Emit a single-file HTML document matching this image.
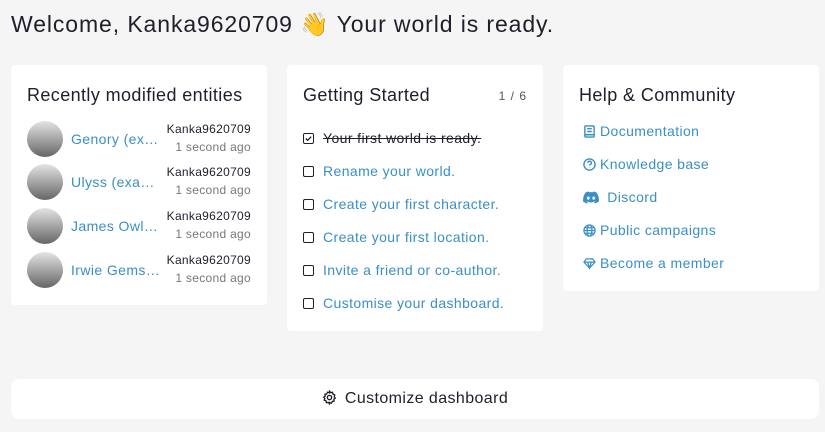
<!DOCTYPE html>
<html><head><style>
body{margin:0;width:825px;height:432px;background:#f5f5f5;font-family:"Liberation Sans",sans-serif;color:#1f1f2b;position:relative;overflow:hidden;letter-spacing:0.4px}
.t{position:absolute;left:11px;top:11px;font-size:23px;letter-spacing:0.9px}
.card{position:absolute;background:#fff;border-radius:4px}
.h{position:absolute;left:16px;top:20px;font-size:18px;letter-spacing:0.4px}
a{color:#3a8fc4;text-decoration:none}
.row{position:absolute;left:16px;width:224px;height:38px}
.av{position:absolute;left:0;top:0;width:36px;height:36px;border-radius:50%;background:linear-gradient(#e4e4e4,#666)}
.nm{position:absolute;left:44px;top:10px;font-size:14px;color:#3a8fc4}
.u{position:absolute;right:0;top:-1px;font-size:12px;text-align:right;line-height:18px;letter-spacing:0.3px}
.u span{color:#777}
.gi{position:absolute;left:16px;font-size:14px;color:#3a8fc4}
.cb{display:inline-block;width:9px;height:9px;border:1.5px solid #1f1f2b;border-radius:2px;margin-right:9px;vertical-align:-1px;position:relative}
.hl{position:absolute;left:20px;font-size:14px;color:#3a8fc4;display:flex;align-items:center;gap:4px}
.hl svg{width:13px;height:13px}
</style></head><body>
<div class="t">Welcome, Kanka9620709 👋 Your world is ready.</div>

<div class="card" style="left:11px;top:65px;width:256px;height:240px">
<div class="h">Recently modified entities</div>
<div class="row" style="top:56px"><div class="av"></div><div class="nm">Genory (ex…</div><div class="u">Kanka9620709<br><span>1 second ago</span></div></div>
<div class="row" style="top:99px"><div class="av"></div><div class="nm">Ulyss (exa…</div><div class="u">Kanka9620709<br><span>1 second ago</span></div></div>
<div class="row" style="top:143px"><div class="av"></div><div class="nm">James Owl…</div><div class="u">Kanka9620709<br><span>1 second ago</span></div></div>
<div class="row" style="top:187px"><div class="av"></div><div class="nm">Irwie Gems…</div><div class="u">Kanka9620709<br><span>1 second ago</span></div></div>
</div>

<div class="card" style="left:287px;top:65px;width:256px;height:266px">
<div class="h">Getting Started</div>
<div style="position:absolute;right:16px;top:24px;font-size:12px;color:#555;letter-spacing:1px">1 / 6</div>
<div class="gi" style="top:65px;color:#1f1f2b"><span class="cb"><svg viewBox="0 0 10 10" style="position:absolute;left:0;top:0;width:9px;height:9px" fill="none" stroke="#1f1f2b" stroke-width="1.4"><path d="M2 5l2 2 4-4"/></svg></span><s>Your first world is ready.</s></div>
<div class="gi" style="top:98px"><span class="cb"></span>Rename your world.</div>
<div class="gi" style="top:131px"><span class="cb"></span>Create your first character.</div>
<div class="gi" style="top:164px"><span class="cb"></span>Create your first location.</div>
<div class="gi" style="top:197px"><span class="cb"></span>Invite a friend or co-author.</div>
<div class="gi" style="top:230px"><span class="cb"></span>Customise your dashboard.</div>
</div>

<div class="card" style="left:563px;top:65px;width:256px;height:226px">
<div class="h">Help &amp; Community</div>
<div class="hl" style="top:58px"><svg viewBox="0 0 14 14" fill="none" stroke="#3a8fc4" stroke-width="1.5"><rect x="2" y="1" width="10" height="12" rx="1"/><path d="M4.5 4h5M4.5 7h5M2 10.5h10"/></svg>Documentation</div>
<div class="hl" style="top:91px"><svg viewBox="0 0 14 14" fill="none" stroke="#3a8fc4" stroke-width="1.5"><circle cx="7" cy="7" r="6"/><path d="M5.2 5.3a1.9 1.9 0 1 1 2.5 1.8c-.5.2-.7.6-.7 1.1M7 10v.3"/></svg>Knowledge base</div>
<div class="hl" style="top:124px"><svg viewBox="0 0 16 12" style="width:16px"><path fill="#3a8fc4" d="M13.5 1A13 13 0 0 0 10.3 0l-.4.8a12 12 0 0 0-3.8 0L5.7 0A13 13 0 0 0 2.5 1C.4 4-.1 7 .1 10a13 13 0 0 0 4 2l.8-1.3-1.3-.6.3-.2a9 9 0 0 0 8.2 0l.3.2-1.3.6.8 1.3a13 13 0 0 0 4-2c.3-3.4-.5-6.4-2.4-9zM5.3 8.2c-.8 0-1.4-.7-1.4-1.6S4.5 5 5.3 5s1.5.7 1.4 1.6c0 .9-.6 1.6-1.4 1.6zm5.4 0c-.8 0-1.4-.7-1.4-1.6S9.9 5 10.7 5s1.5.7 1.4 1.6c0 .9-.6 1.6-1.4 1.6z"/></svg>&nbsp;Discord</div>
<div class="hl" style="top:157px"><svg viewBox="0 0 14 14" fill="none" stroke="#3a8fc4" stroke-width="1.3"><circle cx="7" cy="7" r="6"/><ellipse cx="7" cy="7" rx="2.6" ry="6"/><path d="M1 7h12M2 4h10M2 10h10"/></svg>Public campaigns</div>
<div class="hl" style="top:190px"><svg viewBox="0 0 14 14" fill="none" stroke="#3a8fc4" stroke-width="1.3"><path d="M3.5 2h7l2.5 3.5L7 12 1 5.5zM1 5.5h12M5 5.5l2 6.5 2-6.5"/></svg>Become a member</div>
</div>

<div class="card" style="left:11px;top:379px;width:808px;height:40px;border-radius:8px">
<div style="position:absolute;left:0;right:0;top:11px;text-align:center;font-size:16px"><svg viewBox="0 0 16 16" width="15" height="15" style="vertical-align:-2px;margin-right:8px" fill="none" stroke="#1f1f2b" stroke-width="1.4"><circle cx="8" cy="8" r="2.3"/><path d="M8 1.2l1.2 1.6 2-.4.5 2 1.9.8-.6 1.9 1.2 1.6-1.6 1.2.3 2-2 .3-.8 1.9-1.9-.7L8 14.8l-1.2-1.6-2 .4-.5-2-1.9-.8.6-1.9L1.8 7.7l1.6-1.2-.3-2 2-.3.8-1.9 1.9.7z"/></svg>Customize dashboard</div>
</div>
</body></html>
